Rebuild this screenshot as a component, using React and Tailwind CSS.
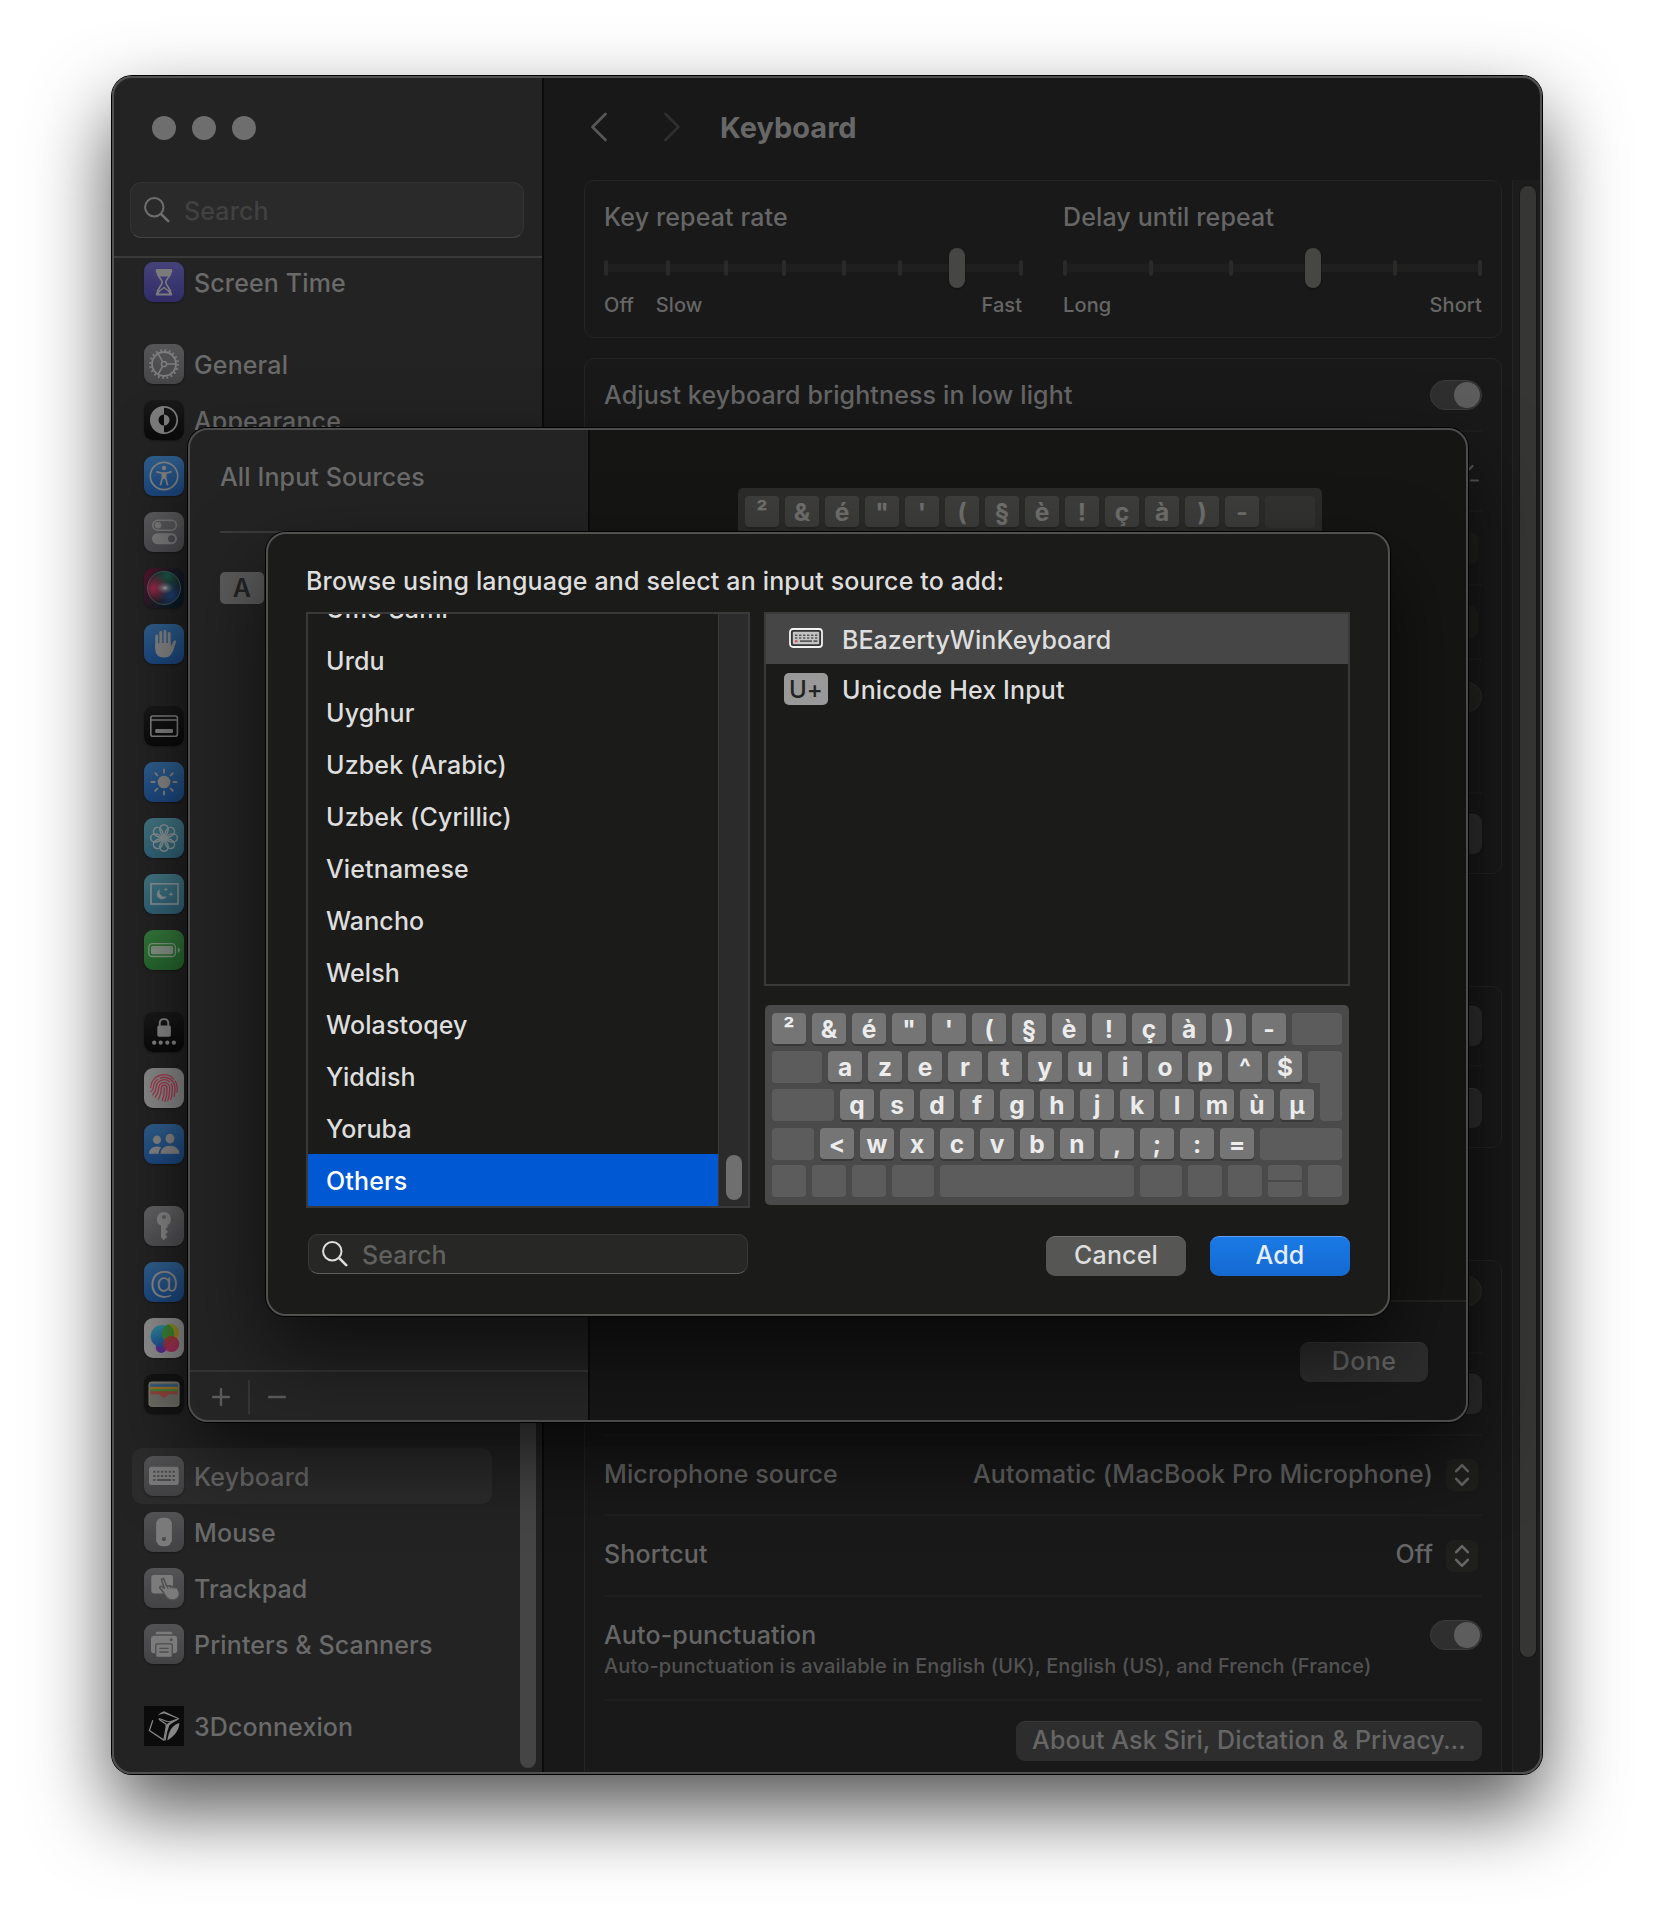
import React from "react";

/* ---------- sidebar glyphs, drawn on a 40px tile ---------- */

const G = "#7b7b7b";

function Svg({ children }) {
  return (
    <svg viewBox="0 0 40 40" className="block size-10" fill="none">
      {children}
    </svg>
  );
}

const Hourglass = () => (
  <Svg>
    <path d="M13 9c0 6.500 5.200 7.600 5.200 11.200S13 26 13 32h14c0-6-5.200-8-5.200-11.800S27 15 27 9" stroke={G} strokeWidth="1.700" />
    <path d="M11.800 8.200c0-.8.500-1.200 1.200-1.200h14c.7 0 1.200.4 1.200 1.200v1.600c0 .5-.3.900-.8 1-.3 1.500-.9 2.600-1.700 3.600H14.300c-.8-1-1.400-2.100-1.700-3.600-.5-.1-.8-.5-.8-1zM11.800 32.200c0-.7.400-1.100.9-1.200.1-.8.300-1.500.6-2.200 2-.7 4.500-2.200 6.700-4.300 2.200 2.100 4.700 3.600 6.700 4.300.3.700.5 1.400.6 2.200.5.100.9.500.9 1.200 0 .8-.5 1.300-1.200 1.300H13c-.7 0-1.200-.5-1.200-1.300z" fill={G} />
    <path d="M14.800 31.500c.6-2.600 3-3 5.200-5 2.200 2 4.600 2.400 5.200 5z" fill="#38346f" />
  </Svg>
);

const Gear = () => (
  <Svg>
    <circle cx="20" cy="20" r="13.900" stroke="#7d7d7e" strokeWidth="2.200" strokeDasharray="1.700 2.667" />
    <circle cx="20" cy="20" r="12" stroke="#7d7d7e" strokeWidth="1.800" />
    <circle cx="20" cy="20" r="2.600" stroke="#7d7d7e" strokeWidth="1.500" />
    <path d="M22.800 20H32M18.600 17.600l-4.600-8M18.600 22.400l-4.600 8" stroke="#7d7d7e" strokeWidth="1.600" />
  </Svg>
);

const Appearance = () => (
  <Svg>
    <circle cx="20" cy="20" r="13.200" stroke={G} strokeWidth="1.700" />
    <path d="M20 6.500a13.500 13.500 0 0 0 0 27z" fill={G} />
    <path d="M20 14.500a5.500 5.500 0 0 0 0 11z" fill="#0c0c0c" />
    <path d="M20 14.500a5.500 5.500 0 0 1 0 11z" fill={G} />
  </Svg>
);

const Accessibility = () => (
  <Svg>
    <circle cx="20" cy="20" r="13.700" stroke="#858585" strokeWidth="1.700" />
    <circle cx="20" cy="12" r="2.200" fill="#858585" />
    <path d="M13 15.900l5.200 1.300h3.600l5.200-1.300M18.400 17.300v4.700l-1.900 6.700M21.600 17.300v4.700l1.900 6.700" stroke="#858585" strokeWidth="1.700" strokeLinecap="round" />
    <path d="M17.900 16.800h4.200v6.200h-4.200z" fill="#858585" />
  </Svg>
);

const ControlCenter = () => (
  <Svg>
    <rect x="8.800" y="8.300" width="23.600" height="9.900" rx="4.950" stroke="#7d7d7d" strokeWidth="1.600" />
    <circle cx="14" cy="13.200" r="3.300" fill="#7d7d7d" />
    <rect x="8" y="21.200" width="25" height="11" rx="5.500" fill="#7d7d7d" />
    <circle cx="27.500" cy="26.700" r="3.500" fill="#4f4f53" />
  </Svg>
);

const Siri = () => (
  <Svg>
    <defs>
      <radialGradient id="siri-pink" cx=".2" cy=".5" r=".45">
        <stop offset="0" stopColor="#a02a4c" />
        <stop offset="1" stopColor="#a02a4c" stopOpacity="0" />
      </radialGradient>
      <radialGradient id="siri-teal" cx=".6" cy=".15" r=".5">
        <stop offset="0" stopColor="#1a5c4c" />
        <stop offset="1" stopColor="#1a5c4c" stopOpacity="0" />
      </radialGradient>
      <radialGradient id="siri-blue" cx=".72" cy=".72" r=".45">
        <stop offset="0" stopColor="#1d437a" />
        <stop offset="1" stopColor="#1d437a" stopOpacity="0" />
      </radialGradient>
      <radialGradient id="siri-core" cx=".5" cy=".5" r=".5">
        <stop offset="0" stopColor="#b4b4b4" />
        <stop offset=".4" stopColor="#949494" stopOpacity=".5" />
        <stop offset="1" stopColor="#808080" stopOpacity="0" />
      </radialGradient>
      <linearGradient id="siri-tile" x1="0" y1="0" x2="1" y2=".5">
        <stop offset="0" stopColor="#58132c" />
        <stop offset=".55" stopColor="#1f1c27" />
        <stop offset="1" stopColor="#0c1c28" />
      </linearGradient>
    </defs>
    <rect width="40" height="40" fill="url(#siri-tile)" />
    <circle cx="20" cy="20" r="17" fill="#1e1f25" />
    <circle cx="20" cy="20" r="17" fill="url(#siri-teal)" />
    <circle cx="20" cy="20" r="17" fill="url(#siri-blue)" />
    <circle cx="20" cy="20" r="17" fill="url(#siri-pink)" />
    <ellipse cx="21" cy="20" rx="9" ry="6" fill="url(#siri-core)" />
    <circle cx="20" cy="20" r="16.500" stroke="#41605c" strokeWidth=".9" />
  </Svg>
);

const Hand = () => (
  <Svg>
    <path d="M12.700 12v12M16.800 8.500v12M21 7.500v12M25.200 9.500v12" stroke="#858585" strokeWidth="2.900" strokeLinecap="round" />
    <path d="M11.250 19h15.400v3.200c1.300-1.400 1.700-2.900 2.500-4.500.5-1 1.300-1.500 2.100-1.200.8.300.9 1.100.6 2-1.300 3.700-1.900 6.900-3.700 10.200-1.700 3.200-4 4.900-8 4.900-5.800 0-8.900-3.300-8.900-9z" fill="#858585" />
  </Svg>
);

const Dock = () => (
  <Svg>
    <rect x="6.800" y="10" width="26.600" height="20.200" rx="2" stroke="#808080" strokeWidth="1.600" />
    <path d="M7 14h26" stroke="#808080" strokeWidth="1.500" />
    <rect x="11.200" y="22.900" width="17.800" height="4" rx="1" fill="#808080" />
  </Svg>
);

const Sun = () => (
  <Svg>
    <circle cx="20" cy="20" r="6.300" fill="#868686" />
    <g stroke="#868686" strokeWidth="1.900" strokeLinecap="round">
      <path d="M20 7.500v3M20 29.500v3M7.500 20h3M29.500 20h3M11.200 11.200l2.100 2.100M26.700 26.700l2.100 2.100M11.200 28.800l2.100-2.100M26.700 13.300l2.100-2.100" />
    </g>
  </Svg>
);

const Flower = () => (
  <Svg>
    <g stroke="#8a9699" strokeWidth="1.500">
      {[0, 45, 90, 135, 180, 225, 270, 315].map((a) => (
        <path key={a} d="M20 20c-1.300-2.600-4.200-4.800-4.200-8.600a4.200 4.700 0 0 1 8.400 0c0 3.800-2.900 6-4.200 8.600z" transform={`rotate(${a} 20 20)`} />
      ))}
      <circle cx="20" cy="20" r="2.400" />
    </g>
  </Svg>
);

const ScreenSaver = () => (
  <Svg>
    <rect x="7" y="9.800" width="27" height="20.200" stroke="#8a9699" strokeWidth="1.600" />
    <path d="M16.500 15.200a5.100 5.100 0 1 0 6.200 6.600 4.600 4.600 0 0 1-6.200-6.600z" fill="#8a9699" />
    <path d="M21.800 13.200l.6 1.600 1.600.6-1.600.6-.6 1.600-.6-1.600-1.600-.6 1.600-.6zM27 17.700l.7 1.800 1.800.7-1.800.7-.7 1.800-.7-1.800-1.800-.7 1.800-.7z" fill="#8a9699" />
  </Svg>
);

const Battery = () => (
  <Svg>
    <rect x="4.800" y="13.700" width="26.600" height="12.800" rx="3.600" stroke="#829a84" strokeWidth="1.300" />
    <rect x="7" y="15.900" width="22.200" height="8.400" rx="1.800" fill="#879487" />
    <path d="M33.800 17.500c1.400.5 2.200 1.300 2.200 2.600s-.8 2.100-2.200 2.600z" fill="#829a84" />
  </Svg>
);

const Lock = () => (
  <Svg>
    <path d="M15.700 14v-2.600c0-2.700 1.800-4.300 4.300-4.300s4.300 1.600 4.300 4.300V14" stroke="#868686" strokeWidth="1.900" />
    <rect x="13.300" y="13.600" width="13.600" height="11.200" rx="1.800" fill="#868686" />
    <g fill="#868686">
      <circle cx="10.200" cy="30.700" r="2.100" />
      <circle cx="16.700" cy="30.700" r="2.100" />
      <circle cx="23.300" cy="30.700" r="2.100" />
      <circle cx="29.900" cy="30.700" r="2.100" />
    </g>
  </Svg>
);

const Touch = () => (
  <Svg>
    <clipPath id="print">
      <circle cx="20" cy="20" r="14" />
    </clipPath>
    <g clipPath="url(#print)" stroke="#a63a4e" strokeWidth="1.350" strokeLinecap="round">
      <path d="M20.300 20c.2 4.500-.3 8.500-2 12.500" />
      <path d="M14.300 31.500c2.300-4 3.100-7.500 3.100-11.500a2.800 2.800 0 0 1 5.600 0c.1 5-.5 9.500-2.200 13.500" />
      <path d="M11.300 29.200c2.600-3.400 3.400-6 3.400-9.200a5.500 5.500 0 0 1 11 0c.1 4.800-.5 9-2 13" />
      <path d="M8.700 26.800c2.300-2.300 3.300-4.300 3.300-6.800a8.200 8.200 0 0 1 13.500-6.300M27.200 15.800c.8 1.300 1.200 2.700 1.200 4.200 0 4.300-.4 8-1.600 11.500" />
      <path d="M7 23.600c1.700-1 2.300-2 2.300-3.600 0-3.500 1.700-6.600 4.300-8.500M16 10.100a10.900 10.900 0 0 1 15 9.900c0 3.300-.2 6-.9 8.600" />
      <path d="M6.700 19.500a13.300 13.300 0 0 1 22.800-8.700M31.300 13a13.300 13.300 0 0 1 2 7c0 1.500 0 3-.3 4.300M11.500 8.500a13.600 13.600 0 0 1 15.500-.4" />
    </g>
  </Svg>
);

const Users = () => (
  <Svg>
    <ellipse cx="13" cy="15.700" rx="4" ry="4.300" fill="#868686" />
    <ellipse cx="26" cy="14.600" rx="4.400" ry="4.900" fill="#868686" />
    <path d="M5 29.800c0-4.300 3.300-7.400 8-7.400 1.700 0 3.200.4 4.400 1.100-1.700 1.600-2.700 3.700-2.700 6.300z" fill="#868686" />
    <path d="M16.500 29.800c0-4.600 4-8 9.500-8s9.300 3.400 9.300 8z" fill="#868686" />
  </Svg>
);

const Key = () => (
  <Svg>
    <path fillRule="evenodd" d="M20 6a7.200 7.200 0 0 0-3 13.700V31.500l2.800 2.700 3.600-3.500-2-2.300 2.600-2.700-2.500-2.700 2.500-2.500-.9-1A7.200 7.200 0 0 0 20 6zm0 2.900a2 2 0 1 1 0 4 2 2 0 0 1 0-4z" fill="#868686" />
  </Svg>
);

const At = () => (
  <div className="flex size-10 items-center justify-center pb-[3px] text-[30px] leading-none font-light tracking-normal text-[#8b8b8b]">@</div>
);

const GameCenter = () => (
  <Svg>
    <defs>
      <linearGradient id="gc-blue" x1=".3" y1="0" x2=".5" y2="1">
        <stop offset="0" stopColor="#2f8e9c" />
        <stop offset="1" stopColor="#1f4a93" />
      </linearGradient>
      <linearGradient id="gc-yellow" x1="0" y1="0" x2=".6" y2="1">
        <stop offset="0" stopColor="#7d962a" />
        <stop offset="1" stopColor="#a4841a" />
      </linearGradient>
      <linearGradient id="gc-red" x1="0" y1="0" x2=".3" y2="1">
        <stop offset="0" stopColor="#a8392d" />
        <stop offset="1" stopColor="#a32358" />
      </linearGradient>
    </defs>
    <circle cx="17.200" cy="29.500" r="5.400" fill="#5a2c94" />
    <circle cx="26.300" cy="14.400" r="8.700" fill="url(#gc-yellow)" />
    <circle cx="17.900" cy="18.200" r="11.200" fill="url(#gc-blue)" />
    <path d="M18 17c0-5.300 3.200-9.300 6-10.500a11.200 11.200 0 0 1 4.400 16c-5 1.500-10.400-.8-10.400-5.500z" fill="#3d8435" />
    <circle cx="27.200" cy="26" r="8" fill="url(#gc-red)" fillOpacity=".9" />
  </Svg>
);

const Wallet = () => (
  <Svg>
    <rect x="5" y="8" width="30" height="24.300" rx="2.400" fill="#6f6d66" stroke="#83817b" />
    <path d="M6.500 10.300h27v3h-27z" fill="#2c5d82" />
    <path d="M6.500 12.700h27v3h-27z" fill="#a0742a" />
    <path d="M6.500 14.900h27v3h-27z" fill="#48803a" />
    <path d="M6.500 17.300h27v2.900h-8.700c-1.400 0-1.500 3.300-4.800 3.300s-3.400-3.300-4.800-3.300H6.500z" fill="#94453d" />
  </Svg>
);

const KeyboardIcon = () => (
  <Svg>
    <rect x="5" y="10.700" width="29.700" height="18.400" rx="2.400" fill={G} />
    <g stroke="#4c4c4e" strokeWidth="2">
      <path d="M9.300 15.800h22" strokeDasharray="2.200 1.660" />
      <path d="M9.300 20h22" strokeDasharray="2.200 1.660" />
      <path d="M9.300 24.100h2.200M13.100 24.100h14M28.600 24.100h2.200" />
    </g>
  </Svg>
);

const Mouse = () => (
  <Svg>
    <rect x="12.100" y="5.700" width="15.800" height="28.500" rx="6.500" fill={G} />
    <path d="M20.100 25.500c.6-1 1.500-.8 1.900-.2-.7.700-.6 1.700.2 2.300-.4 1.100-1.200 1.700-2.100 1.400-1 .3-2.200-.6-2.200-2s1.100-2.100 2.200-1.500z" fill="#4c4c4e" />
  </Svg>
);

const Trackpad = () => (
  <Svg>
    <rect x="7.300" y="7" width="21.700" height="18.400" rx="2.400" fill={G} />
    <path d="M17.500 12.100c-.4-1.400 1.900-2.400 2.600-.6l2.500 6.800c.6-.9 2-.9 2.600.1.900-.9 2.300-.6 2.800.4.900-.7 2.300-.3 2.700.9l2.300 0c2.400 3.600 2.900 6.600 1.600 9.200-1.600 3-5.800 4-9.300 2.500-2.900-1.200-4.300-4.200-6-7-.8-1.400-2.100-2.900-3.200-4-1.100-1.300.7-2.800 2.200-1.700l2 1.600z" fill={G} stroke="#4e4e50" strokeWidth="1.500" strokeLinejoin="round" />
    <path d="M23.300 18.500l.8 2.600M26 18.600l.6 2M28.700 19l.5 1.800" stroke="#4e4e50" strokeWidth="1" />
  </Svg>
);

const Printer = () => (
  <Svg>
    <path d="M13.200 7.700h13.600c.9 0 1.500.8 1.500 1.900v.7H11.700v-.7c0-1.100.6-1.900 1.500-1.900z" fill={G} />
    <rect x="7" y="11.800" width="26.200" height="17.400" rx="3" fill={G} />
    <circle cx="27.200" cy="15.800" r="1.500" fill="#4e4e50" />
    <rect x="11.100" y="19.200" width="17.800" height="14" rx="2" fill="#4e4e50" />
    <rect x="12.400" y="20.600" width="15.200" height="12.200" rx="1.400" fill={G} />
    <path d="M15.300 24.400h9.400M15.300 28h9.400" stroke="#4e4e50" strokeWidth="1.400" />
  </Svg>
);

const Cube = () => (
  <Svg>
    <path d="M13.500 9.800c1.800-2.300 4-3.900 6.500-4.600l15.500 7.200-1 .7L20.300 7.600c-2.300.2-4.600.9-6.800 2.200z" fill="#858585" />
    <g stroke="#858585" fill="none">
      <path d="M15 12.500l8.200 3c1.500.4 3.200.3 5-.4l6.200-2.300" strokeWidth="1.200" />
      <path d="M8.800 14.200L5.400 24.600l14.800 9.800" strokeWidth="1.300" />
      <path d="M14.800 13.300l7 4.700c.6 1.200.6 2.400.3 3.500l-2.200 12.500" strokeWidth="1.300" />
    </g>
    <path d="M22.300 18.600c3.300-2.700 7.500-4.300 13-5.600-4 2.400-7.800 4-9.900 6.200-1.700 4.300-2.800 9-3.600 15l-1.500.4c.6-5.500 1.900-10.500 2-16z" fill="#858585" />
    <path d="M35.300 17c.2 6-4.600 13.200-12 17.500.6-4.300 1.700-8.800 4.300-12.300 2-2.500 4.600-4.300 7.700-5.200z" fill="#858585" />
  </Svg>
);

const GRAY = "bg-linear-to-b from-[#535355] to-[#434345]";
const BLUE = "bg-linear-to-b from-[#30608f] to-[#1b4780]";
const BLACK = "bg-linear-to-b from-[#191919] to-[#0a0a0a]";

const GROUPS = [
  [{ icon: Hourglass, tile: "bg-linear-to-b from-[#46427a] to-[#312c66]", label: "Screen Time" }],
  [
    { icon: Gear, tile: "bg-linear-to-b from-[#565658] to-[#464648]", label: "General" },
    { icon: Appearance, tile: BLACK, label: "Appearance" },
    { icon: Accessibility, tile: BLUE },
    { icon: ControlCenter, tile: "bg-linear-to-b from-[#5e5e60] to-[#4d4d51]" },
    { icon: Siri, tile: "bg-[#1b1b20]" },
    { icon: Hand, tile: BLUE },
  ],
  [
    { icon: Dock, tile: BLACK },
    { icon: Sun, tile: BLUE },
    { icon: Flower, tile: "bg-linear-to-b from-[#437784] to-[#306277]" },
    { icon: ScreenSaver, tile: "bg-linear-to-b from-[#437784] to-[#306277]" },
    { icon: Battery, tile: "bg-linear-to-b from-[#35793c] to-[#25672e]" },
  ],
  [
    { icon: Lock, tile: BLACK },
    { icon: Touch, tile: "bg-[#8a8a8a]" },
    { icon: Users, tile: BLUE },
  ],
  [
    { icon: Key, tile: "bg-linear-to-b from-[#646466] to-[#505053]" },
    { icon: At, tile: BLUE },
    { icon: GameCenter, tile: "bg-[#8f8f8f]" },
    { icon: Wallet, tile: "bg-[#141414]" },
  ],
  [
    { icon: KeyboardIcon, tile: GRAY, label: "Keyboard", selected: true },
    { icon: Mouse, tile: GRAY, label: "Mouse" },
    { icon: Trackpad, tile: GRAY, label: "Trackpad" },
    { icon: Printer, tile: GRAY, label: "Printers & Scanners" },
  ],
  [{ icon: Cube, tile: "bg-[#0b0b0b]", label: "3Dconnexion", square: true }],
];

function SearchGlyph({ className }) {
  return (
    <svg viewBox="0 0 26 26" className={className} fill="none" stroke="currentColor" strokeLinecap="round">
      <circle cx="10.300" cy="10.300" r="9.200" strokeWidth="2" />
      <path d="M17.200 17.200l7 7" strokeWidth="2.600" />
    </svg>
  );
}

function SidebarItem({ icon: Icon, tile, label, selected, square }) {
  return (
    <div className={`flex h-14 w-[360px] shrink-0 items-center gap-[10px] rounded-[10px] pl-3 ${selected ? "bg-[#2c2c2c]" : ""}`}>
      <div className={`size-10 shrink-0 overflow-hidden ${square ? "" : "rounded-[9px] shadow-[0_1px_2px_rgba(0,0,0,0.35)]"} ${tile}`}>
        <Icon />
      </div>
      {label && <span className="pt-[2px] text-[#6a6a6a]">{label}</span>}
    </div>
  );
}

function Sidebar() {
  return (
    <aside className="flex w-[430px] shrink-0 flex-col bg-[#232323]">
      <div className="flex gap-4 pt-10 pl-10">
        <span className="size-6 rounded-full bg-[#6e6e6e]" />
        <span className="size-6 rounded-full bg-[#6e6e6e]" />
        <span className="size-6 rounded-full bg-[#6e6e6e]" />
      </div>
      <div className="mt-[42px] ml-[18px] flex h-14 w-[394px] items-center rounded-[11px] border border-[#333] border-b-[#434343] bg-[#2a2a2a] pl-[13px]">
        <SearchGlyph className="size-[26px] text-[#6f6f6f]" />
        <span className="ml-[14px] pt-[2px] text-[#414141]">Search</span>
      </div>
      <div className="mt-[18px] h-0.5 bg-[#393939]" />
      <div className="flex min-h-0 grow overflow-hidden">
        <nav className="-mt-1 flex flex-col gap-[26px] pl-5">
          {GROUPS.map((group, i) => (
            <div key={i} className="flex flex-col">
              {group.map((item, j) => (
                <SidebarItem key={j} {...item} />
              ))}
            </div>
          ))}
        </nav>
        <div className="mb-[6px] ml-7 h-[620px] w-4 self-end rounded-full bg-[#454545]" />
      </div>
    </aside>
  );
}

/* ---------- settings pane ---------- */

function Slider({ ticks, thumb }) {
  return (
    <div className="relative mt-4 h-10 w-[419px]">
      <div className="absolute top-4 h-2 w-full bg-[#1f1f1f]" />
      {ticks.map((x) => (
        <div key={x} className="absolute top-3 h-4 w-1 rounded-sm bg-[#2a2a29]" style={{ left: x }} />
      ))}
      <div className="absolute top-0 h-10 w-4 rounded-full bg-[#464644] shadow-[0_1px_2px_rgba(0,0,0,0.4)]" style={{ left: thumb }} />
    </div>
  );
}

function Toggle({ on }) {
  return (
    <div className="flex h-[30px] w-[52px] items-center justify-end rounded-full border border-[#3b3b3b] bg-[#2f2f2f] px-[1px]">
      {on && <span className="size-[26px] rounded-full bg-[#5d5d5d]" />}
    </div>
  );
}

const OffToggle = () => <div className="h-[30px] w-[52px] rounded-full border border-[#2f2f2d] bg-[#232321]" />;

function Stepper() {
  return (
    <div className="mr-1 ml-[13px] grid size-8 place-items-center rounded-[7px] bg-[#1f1f1d]">
      <svg viewBox="0 0 16 24" className="h-6 w-4" fill="none" stroke="#666" strokeWidth="2.600" strokeLinecap="round" strokeLinejoin="round">
        <path d="M2.200 8.200L8 2.200l5.800 6M2.200 15.800l5.800 6 5.800-6" />
      </svg>
    </div>
  );
}

const PaneButton = ({ children, className = "" }) => (
  <div className={`flex h-10 items-center justify-center rounded-[9px] border-t border-[#393939] bg-[#2d2d2d] pb-[3px] ${className}`}>{children}</div>
);

const Card = ({ children, className = "" }) => (
  <section className={`w-[918px] shrink-0 rounded-[10px] border border-[#242424] bg-[#191919] px-[19px] ${className}`}>{children}</section>
);

const Row = ({ children, className = "", last }) => (
  <div className={`flex items-center justify-between ${last ? "" : "border-b-2 border-[#1e1e1e]"} ${className}`}>{children}</div>
);

function Pane() {
  return (
    <main className="flex w-[998px] shrink-0 flex-col bg-[#181818] text-[#666]">
      <header className="flex h-[104px] shrink-0 items-center pb-[2px] pl-[46px]">
        <svg viewBox="0 0 18 30" className="h-[30px] w-[18px]" fill="none" stroke="#575757" strokeWidth="2.700" strokeLinecap="round" strokeLinejoin="round">
          <path d="M15.500 2L2.500 15l13 13" />
        </svg>
        <svg viewBox="0 0 18 30" className="ml-[55px] h-[30px] w-[18px]" fill="none" stroke="#2f2f2f" strokeWidth="2.700" strokeLinecap="round" strokeLinejoin="round">
          <path d="M2.500 2l13 13-13 13" />
        </svg>
        <h1 className="ml-[39px] text-[29px] font-bold tracking-normal text-[#676767]">Keyboard</h1>
      </header>
      <div className="flex min-h-0 grow overflow-hidden">
        <div className="flex flex-col pl-10">
          <Card className="flex h-[158px] gap-10">
            <div className="flex w-[419px] flex-col pt-[21px]">
              <div className="h-[30px] leading-[30px]">Key repeat rate</div>
              <Slider ticks={[0, 62, 120, 178, 238, 294, 415]} thumb={345} />
              <div className="mt-[5px] flex text-[20px] leading-6 tracking-[0.05px]">
                <span>Off</span>
                <span className="ml-[22px]">Slow</span>
                <span className="mr-[1px] ml-auto">Fast</span>
              </div>
            </div>
            <div className="flex w-[419px] flex-col pt-[21px]">
              <div className="h-[30px] leading-[30px]">Delay until repeat</div>
              <Slider ticks={[0, 86, 166, 330, 415]} thumb={242} />
              <div className="mt-[5px] flex justify-between text-[20px] leading-6">
                <span>Long</span>
                <span>Short</span>
              </div>
            </div>
          </Card>

          <Card className="mt-5 h-[516px]">
            <Row className="h-[73px]">
              <span className="pt-[2px]">Adjust keyboard brightness in low light</span>
              <Toggle on />
            </Row>
            <Row className="h-[80px] justify-end">
              <svg viewBox="0 0 44 24" className="mr-[3px] h-6 w-11" fill="none" stroke="#565656" strokeWidth="2.200" strokeLinecap="round">
                <path d="M3 21.500h6M36 21.500h7M22 2v6M6.500 7.500L10 11M37.500 7L33 11.500M14 21a8 8 0 0 1 16 0" />
              </svg>
            </Row>
            <Row className="h-[74px] justify-end">
              <Stepper />
            </Row>
            <Row className="h-[74px] justify-end">
              <Stepper />
            </Row>
            <Row className="h-[134px] items-start justify-end pt-[22px]">
              <OffToggle />
            </Row>
            <Row last className="h-[80px] justify-end">
              <PaneButton className="w-40" />
            </Row>
          </Card>

          <Card className="mt-28 h-[162px]">
            <Row className="h-[80px] justify-end">
              <PaneButton className="w-40" />
            </Row>
            <Row last className="h-[81px] justify-end">
              <PaneButton className="w-40" />
            </Row>
          </Card>

          <Card className="mt-28 h-[560px]">
            <Row className="h-[93px] items-start justify-end pt-[15px]">
              <OffToggle />
            </Row>
            <Row className="h-[82px] justify-end">
              <PaneButton className="w-40" />
            </Row>
            <Row className="h-[80px]">
              <span className="pb-[2px]">Microphone source</span>
              <div className="flex items-center">
                <span className="pb-[2px]">Automatic (MacBook Pro Microphone)</span>
                <Stepper />
              </div>
            </Row>
            <Row className="h-[81px]">
              <span className="pb-[3px]">Shortcut</span>
              <div className="flex items-center">
                <span className="pb-[3px]">Off</span>
                <Stepper />
              </div>
            </Row>
            <Row className="h-[104px] items-start pt-[23px]">
              <div className="flex flex-col">
                <span className="leading-[30px]">Auto-punctuation</span>
                <span className="mt-[2px] text-[20px] leading-7 tracking-[0.13px] text-[#525252]">
                  Auto-punctuation is available in English (UK), English (US), and French (France)
                </span>
              </div>
              <Toggle on />
            </Row>
            <Row last className="justify-end pt-[20px]">
              <PaneButton className="w-[466px]">About Ask Siri, Dictation &amp; Privacy…</PaneButton>
            </Row>
          </Card>
        </div>
        <div className="ml-[10px] flex w-[30px] shrink-0 border-l border-[#232323] bg-[#1c1c1c] pt-[6px] pl-[7px]">
          <div className="h-[1471px] w-4 rounded-full bg-[#363634] shadow-[0_0_0_1px_#171717]" />
        </div>
      </div>
    </main>
  );
}

/* ---------- keyboard preview ---------- */

const Cap = ({ children }) => (
  <div className="flex h-[31px] w-[34px] items-center justify-center rounded-[4px] bg-[#757575] pt-[1px] text-[24.5px] leading-none font-bold tracking-normal text-[#ececec] shadow-[0_2px_0_#393939]">
    {children}
  </div>
);

const caps = (keys) => [...keys].map((k) => <Cap key={k}>{k}</Cap>);

const Mod = ({ className }) => <div className={`h-8 rounded-[4px] bg-[#5c5c5c] ${className}`} />;

function KeyboardPreview({ firstRowOnly }) {
  return (
    <div className="flex h-[200px] w-[584px] flex-col gap-[6px] rounded-[5px] bg-[#4a4a4a] pt-2 pl-[7px]">
      <div className="flex gap-[6px]">
        {caps("²&é\"'(§è!çà)-")}
        <Mod className="w-[50px]" />
      </div>
      {!firstRowOnly && (
        <>
          <div className="flex h-8 gap-[6px]">
            <Mod className="w-[50px]" />
            {caps("azertyuiop^$")}
            <Mod className="w-[34px] rounded-br-none" />
          </div>
          <div className="flex h-8 gap-[6px]">
            <Mod className="w-[62px]" />
            {caps("qsdfghjklmùµ")}
            <div className="-mt-[6px] h-[38px] w-[22px] rounded-b-[4px] bg-[#5c5c5c]" />
          </div>
          <div className="mt-px flex h-8 gap-[6px]">
            <Mod className="w-[42px]" />
            {caps("<wxcvbn,;:=")}
            <Mod className="w-[82px]" />
          </div>
          <div className="-mt-px flex gap-[6px]">
            <Mod className="w-[34px]" />
            <Mod className="w-[34px]" />
            <Mod className="w-[34px]" />
            <Mod className="w-[42px]" />
            <Mod className="w-[194px]" />
            <Mod className="w-[42px]" />
            <Mod className="w-[34px]" />
            <Mod className="w-[34px]" />
            <div className="flex h-8 w-[34px] flex-col gap-[2px]">
              <div className="h-[15px] rounded-t-[4px] bg-[#5c5c5c]" />
              <div className="h-[15px] rounded-b-[4px] bg-[#5c5c5c]" />
            </div>
            <Mod className="w-[34px]" />
          </div>
        </>
      )}
    </div>
  );
}

/* ---------- input sources sheet ---------- */

function InputSourcesSheet() {
  return (
    <div className="absolute top-[352px] left-[76px] h-[994px] w-[1280px] rounded-[20px] shadow-[0_0_0_1px_#000,0_36px_80px_rgba(0,0,0,0.6)]">
      <div className="flex h-full overflow-hidden rounded-[20px]">
        <div className="flex w-[400px] shrink-0 flex-col bg-[#232323]">
          <div className="mt-[34px] ml-8 h-[30px] leading-[30px] text-[#6a6a6a]">All Input Sources</div>
          <div className="mt-[39px] ml-8 h-0.5 w-[352px] bg-[#3a3a3a]" />
          <div className="mt-[39px] ml-8 grid h-8 w-11 place-items-center rounded-[5px] bg-[#5a5a5a] pt-px text-[25px] leading-none font-semibold text-[#232323]">A</div>
          <div className="mt-auto flex h-[52px] items-center border-t-2 border-[#343434] bg-[#252525] pl-6">
            <svg viewBox="0 0 18 18" className="size-[18px]" stroke="#5c5c5c" strokeWidth="2.300" strokeLinecap="round">
              <path d="M9 1v16M1 9h16" />
            </svg>
            <div className="ml-[18px] h-[34px] w-0.5 bg-[#363636]" />
            <svg viewBox="0 0 18 18" className="ml-[18px] size-[18px]" stroke="#5c5c5c" strokeWidth="2.300" strokeLinecap="round">
              <path d="M1 9h16" />
            </svg>
          </div>
        </div>
        <div className="w-0.5 shrink-0 bg-[#0b0b0a]" />
        <div className="flex grow flex-col bg-[#151513]">
          <div className="mt-[60px] ml-[148px] opacity-[0.42]">
            <KeyboardPreview firstRowOnly />
          </div>
          <div className="mt-auto flex h-[122px] justify-end border-t-2 border-[#232321] bg-[#161616] pt-10 pr-10">
            <div className="flex h-10 w-32 items-center justify-center rounded-[9px] border-t border-[#373737] bg-[#2d2d2d] pb-[3px] tracking-[0.4px] text-[#666]">Done</div>
          </div>
        </div>
      </div>
      <div className="pointer-events-none absolute inset-0 rounded-[20px] border-2 border-[#4c4c4c]" />
    </div>
  );
}

/* ---------- add input source dialog ---------- */

const LANGUAGES = [
  "Ume Sami",
  "Urdu",
  "Uyghur",
  "Uzbek (Arabic)",
  "Uzbek (Cyrillic)",
  "Vietnamese",
  "Wancho",
  "Welsh",
  "Wolastoqey",
  "Yiddish",
  "Yoruba",
  "Others",
];

function AddSourceDialog() {
  return (
    <div className="absolute top-[456px] left-[154px] h-[784px] w-[1124px] rounded-[20px] bg-[#1b1b19] pt-[34px] pl-10 text-[#dedede] shadow-[0_0_0_1px_#000,0_36px_80px_rgba(0,0,0,0.6)]">
      <div className="h-[30px] leading-[30px] tracking-[0.16px]">Browse using language and select an input source to add:</div>
      <div className="mt-4 flex gap-[14px]">
        <div className="flex w-[444px] flex-col">
          <div className="flex h-[596px] border-2 border-[#3a3a3a]">
            <div className="flex w-[410px] shrink-0 flex-col justify-end overflow-hidden">
              {LANGUAGES.map((name) => (
                <div key={name} className={`flex h-[52px] shrink-0 items-center pt-[2px] pl-[18px] ${name === "Others" ? "bg-[#0059d3] text-white" : ""}`}>
                  {name}
                </div>
              ))}
            </div>
            <div className="flex grow items-end border-l border-[#3a3a3a] bg-[#2b2b2b] pb-[6px] pl-[7px]">
              <div className="h-[45px] w-4 rounded-full bg-[#6f6f6f]" />
            </div>
          </div>
          <div className="mt-[26px] ml-0.5 flex h-10 w-[440px] items-center rounded-[10px] border border-[#393938] border-b-[#5c5c5b] bg-[#272726] pl-[13px]">
            <SearchGlyph className="size-[26px] text-[#dedede]" />
            <span className="ml-[14px] pt-[2px] text-[#61615f]">Search</span>
          </div>
        </div>
        <div className="flex w-[586px] flex-col">
          <div className="h-[374px] border-2 border-[#3a3a3a]">
            <div className="flex h-[50px] items-center bg-[#464646] pl-[18px]">
              <div className="flex w-11 justify-center">
                <svg viewBox="0 0 34 20" className="-mt-0.5 h-5 w-[34px]" fill="none">
                  <rect x="1" y="1" width="32" height="18" rx="3" fill="#333" stroke="#f2f2f2" strokeWidth="1.800" />
                  <rect x="3.800" y="3.800" width="26.400" height="12.400" rx="1" fill="#c2c2c2" />
                  <path d="M6 7.300h23M6 10h23" stroke="#5a5a5a" strokeWidth="1.500" strokeDasharray="2.400 1.600" />
                  <path d="M11 13.200h12M24.500 13.200h4" stroke="#5a5a5a" strokeWidth="1.700" />
                  <path d="M6 13.200h2.500" stroke="#c9504c" strokeWidth="1.900" />
                </svg>
              </div>
              <span className="ml-[14px] pt-[2px] tracking-[0.05px]">BEazertyWinKeyboard</span>
            </div>
            <div className="flex h-[50px] items-center pl-[18px]">
              <div className="grid h-8 w-11 place-items-center rounded-[5px] bg-[#999] pt-px text-[24px] leading-none font-medium text-[#232323]">U+</div>
              <span className="ml-[14px] pt-[2px]">Unicode Hex Input</span>
            </div>
          </div>
          <div className="mt-[19px] ml-px">
            <KeyboardPreview />
          </div>
          <div className="mt-[31px] flex justify-end gap-6">
            <div className="flex h-10 w-[140px] items-center justify-center rounded-[9px] border-t border-[#6c6c6a] bg-[#565654] pb-[3px]">Cancel</div>
            <div className="flex h-10 w-[140px] items-center justify-center rounded-[9px] border-t border-[#5b9df0] bg-linear-to-b from-[#1a7ae6] to-[#146ad0] pb-[3px] text-[#e8eef8]">Add</div>
          </div>
        </div>
      </div>
      <div className="pointer-events-none absolute inset-0 rounded-[20px] border-2 border-[#515150]" />
    </div>
  );
}

export default function App() {
  return (
    <div className="h-[1922px] w-[1654px] overflow-hidden bg-white pt-[76px] pl-28 font-[Inter,sans-serif] text-[25px] leading-none font-[450] tracking-[0.13px] whitespace-nowrap">
      <div className="relative h-[1698px] w-[1430px] rounded-[20px] shadow-[0_0_0_1px_#000,0_36px_80px_rgba(0,0,0,0.68)]">
        <div className="relative flex h-full overflow-hidden rounded-[20px]">
          <Sidebar />
          <div className="w-0.5 shrink-0 bg-[#0b0b0b]" />
          <Pane />
          <InputSourcesSheet />
          <AddSourceDialog />
        </div>
        <div className="pointer-events-none absolute inset-0 rounded-[20px] border-2 border-[#505050]" />
      </div>
    </div>
  );
}
